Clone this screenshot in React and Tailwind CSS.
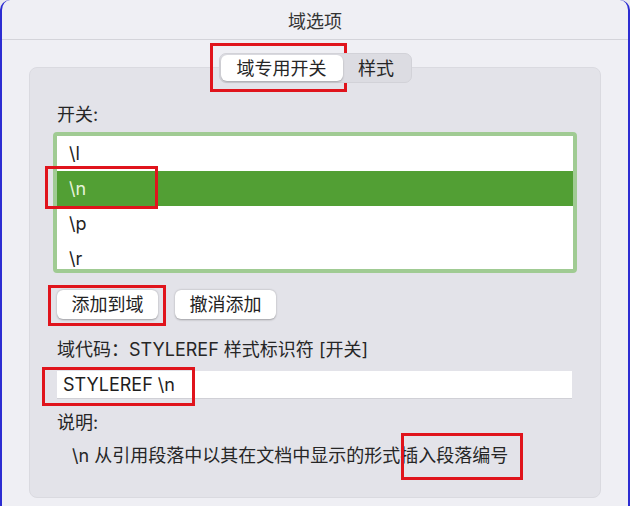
import React from 'react';

const switches = ['\\l', '\\n', '\\p', '\\r'];

function RedBox({ className }) {
  return <div className={`absolute border-[3px] border-[#e0141c] pointer-events-none ${className}`} />;
}

export default function App() {
  return (
    <div className="relative w-[630px] h-[506px] bg-[#e9e9ee] font-['Inter','Noto_Sans_CJK_SC',sans-serif] text-[#262626]">
      <div className="w-full h-full flex flex-col bg-[#efeff4] border-x-2 border-[#2c2cd2] rounded-tl-[10px] rounded-tr-[10px] overflow-hidden">
        {/* title */}
        <div className="h-[40px] shrink-0 flex items-center justify-center pt-[3px] border-b border-[#d4d4da] text-[18px] text-[#333]">
          域选项
        </div>

        <div className="flex flex-col flex-1">
          {/* tabs */}
          <div className="relative z-10 mt-[13px] self-center flex h-[30px] w-[193px] rounded-[7px] bg-[#dcdce2] border border-[#d2d2d8] p-[1px]">
            <div className="w-[122px] rounded-[6px] bg-white shadow-[0_1px_2px_rgba(0,0,0,0.25)] flex items-center justify-center text-[18px]">
              域专用开关
            </div>
            <div className="flex-1 flex items-center justify-center text-[18px]">样式</div>
          </div>

          {/* panel */}
          <div className="mt-[-16px] ml-[27px] w-[572px] h-[431px] rounded-[8px] bg-[#e3e3e9] border border-[#dadae0] pt-[37px] pl-[27px] flex flex-col">
            <div className="h-[20px] leading-[20px] text-[18px]">开关:</div>

            <div className="mt-[7px] -ml-[4px] w-[524px] h-[141px] border-4 border-[#a0cb93] rounded-[4px] bg-white overflow-hidden">
              {switches.map((s) => (
                <div
                  key={s}
                  className={`h-[35px] flex items-center pl-[12px] text-[18px] ${
                    s === '\\n' ? 'bg-[#529f34] text-[#e6f3dc]' : 'text-[#222]'
                  }`}
                >
                  {s}
                </div>
              ))}
            </div>

            <div className="mt-[17px] flex gap-[17px]">
              <button className="w-[101px] h-[29px] rounded-[6px] bg-white shadow-[0_0.5px_2px_rgba(0,0,0,0.3)] text-[18px] text-[#222]">
                添加到域
              </button>
              <button className="w-[101px] h-[29px] rounded-[6px] bg-white shadow-[0_0.5px_2px_rgba(0,0,0,0.3)] text-[18px] text-[#222]">
                撤消添加
              </button>
            </div>

            <div className="mt-[21px] h-[20px] leading-[20px] text-[18px]">域代码：STYLEREF 样式标识符 [开关]</div>

            <div className="mt-[11px] w-[515px] h-[28px] bg-white border-b border-[#d0d0d6] flex items-center pl-[6px] text-[18px] text-[#1e1e1e]">
              STYLEREF \n
            </div>

            <div className="mt-[14px] h-[20px] leading-[20px] text-[18px]">说明:</div>

            <div className="mt-[13px] ml-[15px] h-[20px] leading-[20px] text-[18px]">
              \n 从引用段落中以其在文档中显示的形式插入段落编号
            </div>
          </div>
        </div>
      </div>

      <RedBox className="left-[210px] top-[43px] w-[137px] h-[49px]" />
      <RedBox className="left-[45px] top-[166px] w-[113px] h-[43px]" />
      <RedBox className="left-[48px] top-[285px] w-[118px] h-[41px]" />
      <RedBox className="left-[42px] top-[367px] w-[153px] h-[39px]" />
      <RedBox className="left-[401px] top-[433px] w-[122px] h-[47px]" />
    </div>
  );
}
